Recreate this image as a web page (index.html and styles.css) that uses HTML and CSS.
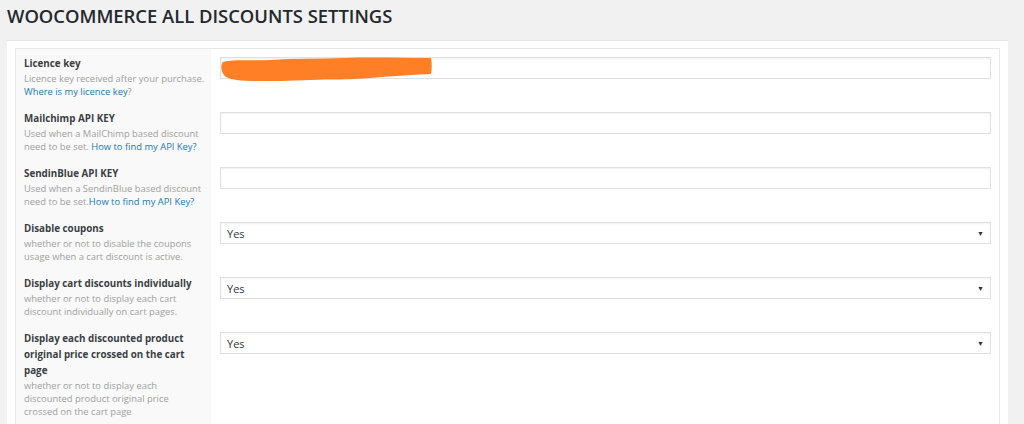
FILE: index.html
```html
<!DOCTYPE html>
<html>
<head>
<meta charset="utf-8">
<link rel="stylesheet" href="styles.css">
</head>
<body>
<h1 class="title">WOOCOMMERCE ALL DISCOUNTS SETTINGS</h1>
<div class="panel">
  <div class="inner">
    <div class="row">
      <div class="th">
        <div class="label">Licence key</div>
        <div class="desc">Licence key received after your purchase.<br><a class="lnk">Where is my licence key</a>?</div>
      </div>
      <div class="td">
        <div class="field">
          <input class="input" type="text">
          <svg class="scribble" width="214" height="28" viewBox="0 0 214 28">
            <path d="M3 7 C15 4 30 6 50 5 C75 3 100 4 125 3 C150 2 180 3 211 3 C212 8 212 14 211 19 C190 20 170 21 150 23 C130 25 110 24 90 25 C70 26 50 26 35 26 C22 26 12 25 6 22 C1 18 0 11 3 7 Z" fill="#fe7f26"/>
          </svg>
        </div>
      </div>
    </div>
    <div class="row">
      <div class="th">
        <div class="label">Mailchimp API KEY</div>
        <div class="desc">Used when a MailChimp based discount need to be set. <a class="lnk">How to find my API Key?</a></div>
      </div>
      <div class="td"><input class="input" type="text"></div>
    </div>
    <div class="row">
      <div class="th">
        <div class="label">SendinBlue API KEY</div>
        <div class="desc">Used when a SendinBlue based discount need to be set.<a class="lnk">How to find my API Key?</a></div>
      </div>
      <div class="td"><input class="input" type="text"></div>
    </div>
    <div class="row">
      <div class="th">
        <div class="label">Disable coupons</div>
        <div class="desc">whether or not to disable the coupons usage when a cart discount is active.</div>
      </div>
      <div class="td"><div class="select"><span>Yes</span><span class="arrow">▼</span></div></div>
    </div>
    <div class="row">
      <div class="th">
        <div class="label">Display cart discounts individually</div>
        <div class="desc">whether or not to display each cart discount individually on cart pages.</div>
      </div>
      <div class="td"><div class="select"><span>Yes</span><span class="arrow">▼</span></div></div>
    </div>
    <div class="row last">
      <div class="th">
        <div class="label">Display each discounted product original price crossed on the cart page</div>
        <div class="desc">whether or not to display each discounted product original price<br>crossed on the cart page</div>
      </div>
      <div class="td"><div class="select"><span>Yes</span><span class="arrow">▼</span></div></div>
    </div>
  </div>
</div>
</body>
</html>
```
FILE: styles.css
```css
html, body {
  margin: 0;
  padding: 0;
  background: #f1f1f1;
  font-family: "Open Sans", "Liberation Sans", sans-serif;
  color: #23282d;
  overflow: hidden;
}
.title {
  margin: 0;
  padding: 4px 0 0 7px;
  height: 40px;
  box-sizing: border-box;
  font-size: 18.4px;
  font-weight: 600;
  line-height: 24px;
  color: #23282d;
}
.panel {
  margin: 0 16px 0 7px;
  background: #fff;
  border-top: 1px solid #e6e6e6;
  padding: 7px 8px 0 8px;
  height: 384px;
  box-sizing: border-box;
}
.inner {
  border: 1px solid #e8e8e8;
  border-bottom: none;
  height: 376px;
  box-sizing: border-box;
  display: flex;
  flex-direction: column;
}
.row {
  display: flex;
  min-height: 55px;
  flex: none;
}
.row.last {
  flex: 1;
  min-height: 0;
}
.th {
  width: 195px;
  flex: none;
  background: #f9f9f9;
  padding: 7px 4px 0 8px;
  box-sizing: border-box;
}
.label {
  font-size: 9.8px;
  font-weight: 700;
  line-height: 16px;
  color: #3b3f44;
  padding-right: 4px;
}
.desc {
  font-size: 9.4px;
  line-height: 13px;
  color: #a0a0a0;
}
.lnk {
  color: #2079b0;
}
.td {
  flex: 1;
  padding: 8px 8px 0 9px;
}
.field {
  position: relative;
}
.input {
  display: block;
  width: 100%;
  height: 22px;
  box-sizing: border-box;
  margin: 0;
  border: 1px solid #e0e0e0;
  box-shadow: inset 0 1px 2px rgba(0,0,0,0.06);
  background: #fff;
  padding: 0 6px;
}
.scribble {
  position: absolute;
  left: 0;
  top: -2px;
}
.select {
  display: flex;
  justify-content: space-between;
  align-items: center;
  height: 22px;
  box-sizing: border-box;
  border: 1px solid #e0e0e0;
  box-shadow: inset 0 1px 2px rgba(0,0,0,0.05);
  padding: 0 6px 0 6px;
  font-size: 11px;
  color: #32373c;
}
.arrow {
  font-size: 7px;
  color: #333;
  margin-top: 1px;
}
```
